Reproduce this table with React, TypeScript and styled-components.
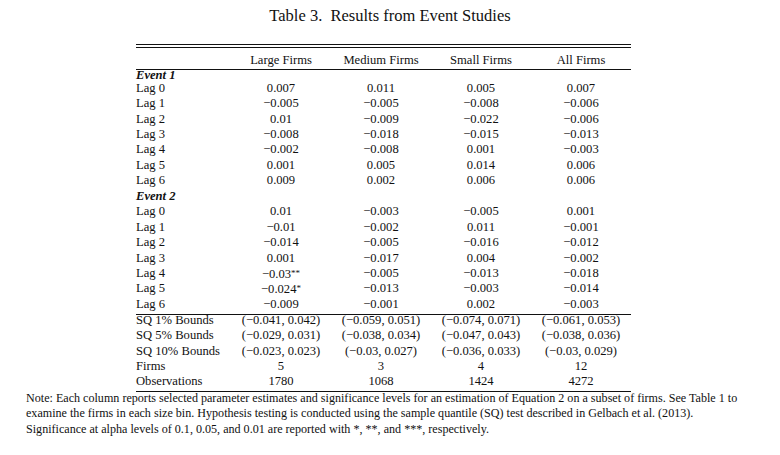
import React from "react";
import styled, { createGlobalStyle } from "styled-components";

const GlobalStyle = createGlobalStyle`
  html, body {
    margin: 0;
    padding: 0;
    background: #ffffff;
  }
  body {
    font-family: "Liberation Serif", "Times New Roman", serif;
    color: #111111;
  }
`;

const Page = styled.div`
  width: 780px;
  height: 455px;
  overflow: hidden;
`;

const Title = styled.h1`
  margin: 0;
  padding-top: 6px;
  height: 38px;
  box-sizing: border-box;
  font-size: 16.5px;
  font-weight: normal;
  line-height: 20px;
  text-align: center;
  letter-spacing: 0;
`;

const TableBlock = styled.div`
  margin-left: 136px;
  width: 495px;
  margin-top: 6px;
  font-size: 12.6px;
`;

const Rule = styled.div<{ $gapTop?: number }>`
  height: 1px;
  background: #111111;
  margin-top: ${(p) => p.$gapTop ?? 0}px;
`;

const Row = styled.div<{ $h: number; $pt?: number }>`
  display: grid;
  grid-template-columns: 95px repeat(4, 100px);
  height: ${(p) => p.$h}px;
  line-height: ${(p) => p.$h - (p.$pt ?? 0)}px;
  padding-top: ${(p) => p.$pt ?? 0}px;
  box-sizing: border-box;
  white-space: nowrap;
`;

const Label = styled.div`
  text-align: left;
`;

const Cell = styled.div`
  text-align: center;
`;

const EventLabel = styled.span`
  font-weight: bold;
  font-style: italic;
  vertical-align: 4px;
`;

const Section = styled.div<{ $shift: number }>`
  margin-top: ${(p) => p.$shift}px;
`;

const Star = styled.span`
  font-size: 9px;
  vertical-align: 2px;
`;

const Note = styled.div`
  margin-top: -1px;
  padding-left: 26px;
  font-size: 12.1px;
  line-height: 15.4px;
  letter-spacing: 0;
`;

const NoteLine = styled.div`
  white-space: nowrap;
`;

const M = "\u2212";

const event1: [string, string[]][] = [
  ["Lag 0", ["0.007", "0.011", "0.005", "0.007"]],
  ["Lag 1", [`${M}0.005`, `${M}0.005`, `${M}0.008`, `${M}0.006`]],
  ["Lag 2", ["0.01", `${M}0.009`, `${M}0.022`, `${M}0.006`]],
  ["Lag 3", [`${M}0.008`, `${M}0.018`, `${M}0.015`, `${M}0.013`]],
  ["Lag 4", [`${M}0.002`, `${M}0.008`, "0.001", `${M}0.003`]],
  ["Lag 5", ["0.001", "0.005", "0.014", "0.006"]],
  ["Lag 6", ["0.009", "0.002", "0.006", "0.006"]],
];

const event2: [string, string[]][] = [
  ["Lag 0", ["0.01", `${M}0.003`, `${M}0.005`, "0.001"]],
  ["Lag 1", [`${M}0.01`, `${M}0.002`, "0.011", `${M}0.001`]],
  ["Lag 2", [`${M}0.014`, `${M}0.005`, `${M}0.016`, `${M}0.012`]],
  ["Lag 3", ["0.001", `${M}0.017`, "0.004", `${M}0.002`]],
  ["Lag 4", [`${M}0.03**`, `${M}0.005`, `${M}0.013`, `${M}0.018`]],
  ["Lag 5", [`${M}0.024*`, `${M}0.013`, `${M}0.003`, `${M}0.014`]],
  ["Lag 6", [`${M}0.009`, `${M}0.001`, "0.002", `${M}0.003`]],
];

const lower: [string, string[]][] = [
  ["SQ 1% Bounds", [`(${M}0.041, 0.042)`, `(${M}0.059, 0.051)`, `(${M}0.074, 0.071)`, `(${M}0.061, 0.053)`]],
  ["SQ 5% Bounds", [`(${M}0.029, 0.031)`, `(${M}0.038, 0.034)`, `(${M}0.047, 0.043)`, `(${M}0.038, 0.036)`]],
  ["SQ 10% Bounds", [`(${M}0.023, 0.023)`, `(${M}0.03, 0.027)`, `(${M}0.036, 0.033)`, `(${M}0.03, 0.029)`]],
  ["Firms", ["5", "3", "4", "12"]],
  ["Observations", ["1780", "1068", "1424", "4272"]],
];

const headers = ["Large Firms", "Medium Firms", "Small Firms", "All Firms"];

function Value({ v }: { v: string }) {
  const m = v.match(/^(.*?)(\*+)$/);
  if (!m) return <>{v}</>;
  return (
    <>
      {m[1]}
      <Star>{m[2]}</Star>
    </>
  );
}

function DataRows({ rows, h }: { rows: [string, string[]][]; h: number }) {
  return (
    <>
      {rows.map(([label, vals]) => (
        <Row key={label} $h={h}>
          <Label>{label}</Label>
          {vals.map((v, i) => (
            <Cell key={i}>
              <Value v={v} />
            </Cell>
          ))}
        </Row>
      ))}
    </>
  );
}

export default function App() {
  const pitch = 15.45;
  return (
    <Page>
      <GlobalStyle />
      <Title>Table 3.&nbsp; Results from Event Studies</Title>
      <TableBlock>
        <Rule />
        <Rule $gapTop={2} />
        <Row $h={21} $pt={4}>
          <Label />
          {headers.map((h) => (
            <Cell key={h}>{h}</Cell>
          ))}
        </Row>
        <Rule />
        <Row $h={10.7}>
          <Label>
            <EventLabel>Event 1</EventLabel>
          </Label>
        </Row>
        <DataRows rows={event1} h={pitch} />
        <Row $h={pitch}>
          <Label>
            <EventLabel>Event 2</EventLabel>
          </Label>
        </Row>
        <DataRows rows={event2} h={pitch} />
        <Rule $gapTop={1.5} />
        <Section $shift={-1.6}>
          <DataRows rows={lower} h={15.2} />
        </Section>
        <Rule $gapTop={1.6} />
      </TableBlock>
      <Note>
        <NoteLine>
          Note: Each column reports selected parameter estimates and significance levels for an estimation of Equation 2 on a subset of firms. See Table 1 to
        </NoteLine>
        <NoteLine>
          examine the firms in each size bin. Hypothesis testing is conducted using the sample quantile (SQ) test described in Gelbach et al. (2013).
        </NoteLine>
        <NoteLine>
          Significance at alpha levels of 0.1, 0.05, and 0.01 are reported with *, **, and ***, respectively.
        </NoteLine>
      </Note>
    </Page>
  );
}
